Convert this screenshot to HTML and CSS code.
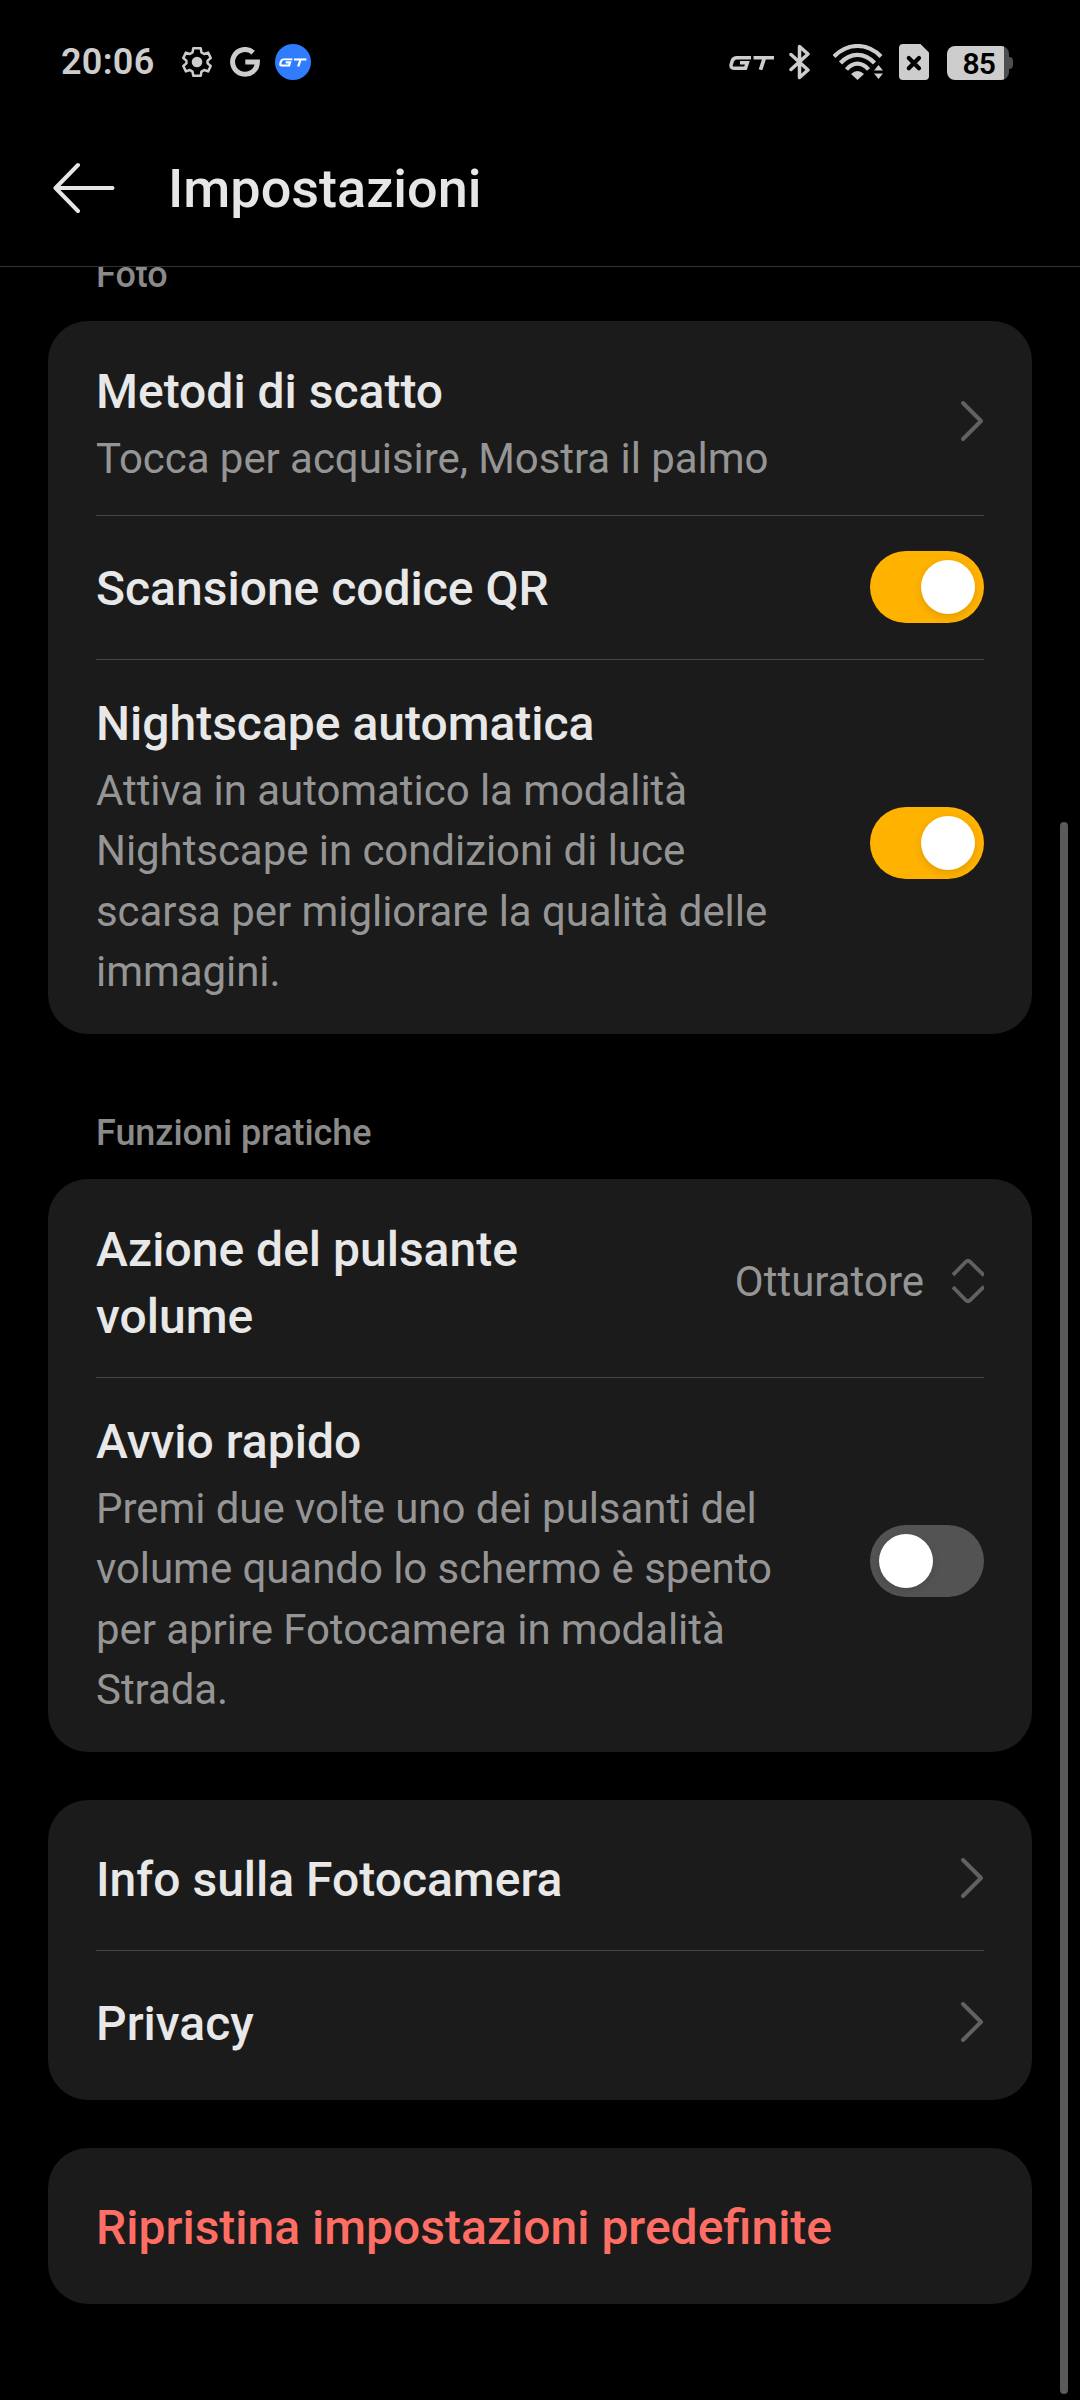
FILE: index.html
```html
<!DOCTYPE html>
<html lang="it">
<head>
<meta charset="utf-8">
<title>Impostazioni</title>
<link rel="stylesheet" href="styles.css">
</head>
<body>
<svg class="defs" aria-hidden="true">
  <symbol id="gt" viewBox="0 0 46 14">
    <path d="M22 1.7H8Q4.500 1.700 3.200 5L2.200 8.500Q1.300 12.200 5 12.200H16.500L18.300 6.700H11" fill="none" stroke="currentColor" stroke-width="3.500"/>
    <path d="M24.500 1.700H45M35.500 1.700L31.500 13.800" fill="none" stroke="currentColor" stroke-width="3.700"/>
  </symbol>
  <symbol id="chevron" viewBox="0 0 24 42">
    <path d="M3 3L21 21L3 39" fill="none" stroke="currentColor" stroke-width="4" stroke-linecap="round" stroke-linejoin="round"/>
  </symbol>
</svg>
<div class="screen">
  <div class="status">
    <span class="clock">20:06</span>
    <svg class="gear" viewBox="0 0 30 30">
      <path d="M11.300 1.300H18.700L19.500 5.400L22.200 7L26.100 5.600L28.700 11L25.600 13.600V16.400L28.700 19L26.100 24.400L22.200 23L19.500 24.600L18.700 28.700H11.300L10.500 24.600L7.800 23L3.900 24.400L1.300 19L4.400 16.400V13.600L1.300 11L3.900 5.600L7.800 7L10.500 5.400Z" fill="none" stroke="currentColor" stroke-width="2.500" stroke-linejoin="round"/>
      <circle cx="15" cy="15" r="5.300" fill="currentColor"/>
    </svg>
    <svg class="google" viewBox="0 0 30 30">
      <path d="M23.200 5.600A12.400 12.400 0 1 0 27.400 14.900H15.300" fill="none" stroke="currentColor" stroke-width="5"/>
    </svg>
    <span class="gt-badge"><svg viewBox="0 0 46 14"><use href="#gt"/></svg></span>
    <svg class="gt-mark" viewBox="0 0 46 14"><use href="#gt"/></svg>
    <svg class="bluetooth" viewBox="0 0 22 36">
      <path d="M2 10.500L19 26L10.500 33.500V2.500L19 10L2 25.500" fill="none" stroke="currentColor" stroke-width="3.500" stroke-linecap="round" stroke-linejoin="round"/>
    </svg>
    <svg class="wifi" viewBox="0 0 50 36">
      <g fill="none" stroke="currentColor" stroke-width="4.200" stroke-linecap="butt">
        <path d="M1 12.500Q11.500 2 24.500 2T48 12.500"/>
        <path d="M7.500 19Q15 10.800 24.500 10.800T41.500 19"/>
        <path d="M13.500 25.500Q18.500 19.700 24.500 19.700T35.500 25.500"/>
      </g>
      <path d="M18 30Q24.500 24 31 30L24.500 36Z" fill="currentColor"/>
      <path d="M45.500 21L50 26.500H41ZM41 29.500H50L45.500 35Z" fill="currentColor"/>
    </svg>
    <svg class="sim" viewBox="0 0 30 36">
      <path d="M4 0H21.500L30 8.500V32Q30 36 26 36H4Q0 36 0 32V4Q0 0 4 0Z" fill="currentColor"/>
      <path d="M9.800 14L20 24.200M20 14L9.800 24.200" stroke="#000" stroke-width="4.200" stroke-linecap="round"/>
    </svg>
    <span class="battery"><span class="battery-level">85</span></span>
  </div>

  <header class="header">
    <svg class="back" viewBox="0 0 62 52">
      <path d="M25 3L2.500 26L25 49M2.500 26H59.500" fill="none" stroke="currentColor" stroke-width="4" stroke-linecap="round" stroke-linejoin="round"/>
    </svg>
    <h1 class="title">Impostazioni</h1>
  </header>

  <main class="content">
    <h2 class="label label-first">Foto</h2>
    <section class="card">
      <div class="row row-short">
        <div class="text"><div class="name">Metodi di scatto</div><div class="desc">Tocca per acquisire, Mostra il palmo</div></div>
        <svg class="chevron" viewBox="0 0 24 42"><use href="#chevron"/></svg>
      </div>
      <div class="row row-switch">
        <div class="name">Scansione codice QR</div>
        <span class="switch on"><span class="knob"></span></span>
      </div>
      <div class="row">
        <div class="text"><div class="name">Nightscape automatica</div><div class="desc">Attiva in automatico la modalità Nightscape in condizioni di luce scarsa per migliorare la qualità delle immagini.</div></div>
        <span class="switch on"><span class="knob"></span></span>
      </div>
    </section>

    <h2 class="label">Funzioni pratiche</h2>
    <section class="card">
      <div class="row row-select">
        <div class="name name-narrow">Azione del pulsante volume</div>
        <div class="select">
          <span class="value">Otturatore</span>
          <svg class="updown" viewBox="0 0 32 46">
            <path d="M1 17L13.800 3.800Q16 1.700 18.200 3.800L32 17.500M1 29L13.800 42.200Q16 44.300 18.200 42.200L32 28.500" fill="none" stroke="currentColor" stroke-width="3.800"/>
          </svg>
        </div>
      </div>
      <div class="row">
        <div class="text"><div class="name">Avvio rapido</div><div class="desc">Premi due volte uno dei pulsanti del volume quando lo schermo è spento per aprire Fotocamera in modalità Strada.</div></div>
        <span class="switch"><span class="knob"></span></span>
      </div>
    </section>

    <section class="card card-links">
      <div class="row">
        <div class="name">Info sulla Fotocamera</div>
        <svg class="chevron" viewBox="0 0 24 42"><use href="#chevron"/></svg>
      </div>
      <div class="row">
        <div class="name">Privacy</div>
        <svg class="chevron" viewBox="0 0 24 42"><use href="#chevron"/></svg>
      </div>
    </section>

    <section class="card card-links">
      <div class="row"><div class="name danger">Ripristina impostazioni predefinite</div></div>
    </section>
  </main>
  <div class="scrollbar"></div>
</div>
</body>
</html>
```
FILE: styles.css
```css
* { box-sizing: border-box; }
body {
  margin: 0;
  background: #000;
  font-family: Roboto, sans-serif;
}
h1, h2 { margin: 0; font-weight: 500; }
svg { display: block; flex: none; }
.defs { display: none; }
.screen {
  position: relative;
  width: 1080px;
  height: 2400px;
  overflow: hidden;
  display: flex;
  flex-direction: column;
}

/* status bar */
.status {
  flex: none;
  height: 110px;
  padding: 14px 67px 0 61px;
  display: flex;
  align-items: center;
  color: #cdcdcd;
}
.clock {
  width: 121px;
  font-size: 36px;
  line-height: 42px;
  font-weight: 600;
  letter-spacing: .3px;
}
.gear { width: 30px; height: 30px; }
.google { width: 30px; height: 30px; margin-left: 18px; }
.gt-badge {
  width: 36px;
  height: 36px;
  margin-left: 15px;
  border-radius: 50%;
  background: #2f7cff;
  color: #fff;
  display: flex;
  align-items: center;
  justify-content: center;
}
.gt-badge svg { width: 28px; height: 9px; }
.gt-mark { width: 46px; height: 14px; margin-left: auto; margin-top: 2px; }
.bluetooth { width: 22px; height: 36px; margin-left: 14px; }
.wifi { width: 50px; height: 36px; margin-left: 22px; }
.sim { width: 30px; height: 36px; margin-left: 16px; }
.battery {
  position: relative;
  width: 62px;
  height: 34px;
  margin-left: 18px;
  margin-right: 4px;
  margin-top: 2px;
  border-radius: 8px;
  background: linear-gradient(to right, #cdcdcd 57px, #4e4e4e 57px);
}
.battery::after {
  content: "";
  position: absolute;
  left: 62px;
  top: 11px;
  width: 4px;
  height: 12px;
  border-radius: 0 4px 4px 0;
  background: #4e4e4e;
}
.battery-level {
  display: block;
  padding-left: 15.5px;
  font-size: 30px;
  line-height: 36px;
  font-weight: 600;
  letter-spacing: -.8px;
  color: #000;
}

/* header */
.header {
  flex: none;
  height: 157px;
  padding: 0 0 1px 53px;
  border-bottom: 1px solid #333;
  display: flex;
  align-items: center;
  color: #e6e6e6;
}
.back { width: 62px; height: 52px; }
.title { margin-left: 53px; padding-top: 3px; font-size: 54px; line-height: 64px; }

/* settings list */
.content { flex: 1; min-height: 0; overflow: hidden; padding: 0 48px; }
.label {
  margin: 78px 48px 25px;
  font-size: 36px;
  line-height: 42px;
  letter-spacing: -.05px;
  color: #8a8a8a;
}
.label-first { margin-top: -13px; }
.card {
  padding: 6px 48px;
  border-radius: 40px;
  background: #1b1b1b;
}
.card-links { margin-top: 48px; padding: 7px 48px 5px; }
.row {
  min-height: 144px;
  display: flex;
  align-items: center;
  justify-content: space-between;
  border-bottom: 1px solid #474747;
}
.row:last-child { border-bottom-color: transparent; }
.row-short { min-height: 189px; }
.row-switch { padding-bottom: 1px; }
.row-select { min-height: 193px; padding-top: 1px; }
.text { width: 684px; padding: 27px 0 24.8px; }
.name {
  padding-top: 3px;
  font-size: 48px;
  line-height: 67px;
  font-weight: 500;
  color: #e8e8e8;
}
.name-narrow { width: 480px; }
.desc {
  margin-top: 4px;
  font-size: 42px;
  line-height: 60.3px;
  letter-spacing: -.06px;
  color: #959595;
}
.danger { color: #ff6e64; }
.chevron { width: 24px; height: 42px; color: #616161; }
.select { display: flex; align-items: center; gap: 28px; }
.value { padding-top: 2px; font-size: 42px; line-height: 50px; color: #959595; }
.updown { width: 32px; height: 46px; color: #616161; }

.switch {
  flex: none;
  width: 114px;
  height: 72px;
  padding: 9px;
  border-radius: 36px;
  background: #535353;
  display: flex;
}
.switch.on { background: #ffb200; justify-content: flex-end; }
.knob {
  width: 54px;
  height: 54px;
  border-radius: 50%;
  background: #fff;
  box-shadow: 0 3px 8px rgba(0, 0, 0, .12);
}

.scrollbar {
  position: absolute;
  left: 1060px;
  top: 822px;
  width: 8px;
  height: 1572px;
  border-radius: 4px;
  background: #5a5a5a;
}
```
